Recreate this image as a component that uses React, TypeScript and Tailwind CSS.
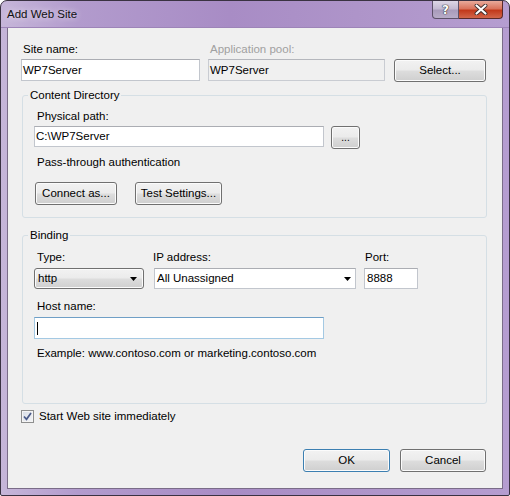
import React from 'react';

const btn =
  'flex items-center justify-center rounded-[3px] border border-[#707070] bg-[linear-gradient(to_bottom,#f2f2f2_0%,#ebebeb_48%,#dddddd_52%,#cfcfcf_100%)] shadow-[inset_0_0_0_1px_#fbfbfb]';
const field =
  'flex items-center border border-[#c2c6cd] border-t-[#abadb3] bg-white pl-[1px]';

function Arrow() {
  return (
    <svg width="7" height="4" viewBox="0 0 7 4" className="shrink-0">
      <path d="M0 0h7L3.5 4z" fill="#000" />
    </svg>
  );
}

export default function App() {
  return (
    <div className="w-[510px] h-[496px] font-['Liberation_Sans',Arial,sans-serif] text-[11.5px] leading-[15px] text-black bg-white">
      <div className="w-[510px] h-[496px] flex flex-col rounded-t-[7px] rounded-b-[2px] border border-[#3a3242] bg-[linear-gradient(90deg,#c6b6d9_0%,#b29bcd_15%,#a88cc5_45%,#ae94c9_70%,#b59dd0_100%)]">
        {/* title bar */}
        <div className="h-[27px] flex items-center pl-[6px] border-b border-[#9d84b8]">
          <span className="text-[#111] [text-shadow:0_0_6px_#f3edf8]">Add Web Site</span>
          <div className="ml-auto mr-[6px] self-start flex h-[18px]">
            <div className="w-[27px] h-[18px] flex items-center justify-center rounded-bl-[4px] border border-t-0 border-[#5d5169] bg-[linear-gradient(to_bottom,#ddd6e6_0%,#c4bad2_45%,#a99bbb_55%,#b8acc8_100%)]">
              <span className="font-['DejaVu_Sans',sans-serif] font-bold text-[12px] leading-[12px] text-white [text-shadow:0_0_1px_#333,0_0_1px_#333,0_0_1px_#333]">?</span>
            </div>
            <div className="w-[44px] h-[18px] flex items-center justify-center rounded-br-[4px] border border-t-0 border-l-0 border-[#5a2a2a] bg-[linear-gradient(to_bottom,#e9aa9b_0%,#d9735c_45%,#c2391b_55%,#d2664a_100%)]">
              <svg width="14" height="11" viewBox="0 0 14 11">
                <path d="M2.5 1.5l9 8M11.5 1.5l-9 8" stroke="#3a2a2a" strokeWidth="3.8" strokeLinecap="round" />
                <path d="M2.5 1.5l9 8M11.5 1.5l-9 8" stroke="#ffffff" strokeWidth="2.2" strokeLinecap="round" />
              </svg>
            </div>
          </div>
        </div>

        {/* client area */}
        <div className="flex-1 mx-[6px] mb-[6px] border border-[#7a6c88] border-t-0 bg-[#f0f0f0] flex flex-col pl-[13px] pr-[15px] pt-[14px]">
          {/* site name row */}
          <div className="flex items-start">
            <div className="w-[179px] flex flex-col gap-[2px]">
              <span className="pl-[2px]">Site name:</span>
              <div className={`${field} h-[22px]`}>WP7Server</div>
            </div>
            <div className="w-[177px] ml-[8px] flex flex-col gap-[2px]">
              <span className="pl-[2px] text-[#a0a0a0]">Application pool:</span>
              <div className="h-[22px] flex items-center border border-[#c9ccd2] border-t-[#b5b7bd] bg-[#f0f0f0] pl-[1px]">WP7Server</div>
            </div>
            <div className={`${btn} w-[92px] h-[23px] ml-[9px] mt-[17px]`}>Select...</div>
          </div>

          {/* content directory */}
          <fieldset className="mt-[6px] ml-[1px] border border-[#d5dfe5] rounded-[3px] pl-[11px] pr-[11px] pt-[6px] pb-[12px] flex flex-col">
            <legend className="-ml-[6px] px-[2px] leading-[15px]">Content Directory</legend>
            <span className="pl-[3px]">Physical path:</span>
            <div className="flex items-start mt-[2px]">
              <div className={`${field} w-[290px] h-[21px]`}>C:\WP7Server</div>
              <div className={`${btn} w-[29px] h-[23px] ml-[7px] text-[10px] leading-[10px]`}>...</div>
            </div>
            <span className="pl-[3px] mt-[6px]">Pass-through authentication</span>
            <div className="flex mt-[12px] ml-[1px]">
              <div className={`${btn} w-[82px] h-[23px]`}>Connect as...</div>
              <div className={`${btn} w-[87px] h-[23px] ml-[18px]`}>Test Settings...</div>
            </div>
          </fieldset>

          {/* binding */}
          <fieldset className="mt-[10px] ml-[1px] border border-[#d5dfe5] rounded-[3px] pl-[11px] pr-[11px] pt-[7px] pb-[42px] flex flex-col">
            <legend className="-ml-[6px] px-[2px] leading-[15px]">Binding</legend>
            <div className="flex items-start">
              <div className="w-[110px] flex flex-col gap-[3px]">
                <span className="pl-[3px]">Type:</span>
                <div className={`${btn} h-[21px] !justify-between pl-[3px] pr-[6px]`}>
                  <span>http</span>
                  <Arrow />
                </div>
              </div>
              <div className="w-[202px] ml-[10px] flex flex-col gap-[3px]">
                <span className="-ml-[1px]">IP address:</span>
                <div className={`${field} h-[21px] justify-between pl-[2px] pr-[4px]`}>
                  <span>All Unassigned</span>
                  <Arrow />
                </div>
              </div>
              <div className="w-[54px] ml-[8px] flex flex-col gap-[3px]">
                <span className="pl-[1px]">Port:</span>
                <div className={`${field} h-[21px] pl-[2px]`}>8888</div>
              </div>
            </div>
            <span className="pl-[3px] mt-[10px]">Host name:</span>
            <div className="mt-[3px] w-[290px] h-[22px] flex items-center border border-[#a4c9e3] border-t-[#6f9fc6] bg-white pl-[2px]">
              <div className="w-[1px] h-[13px] bg-black" />
            </div>
            <span className="pl-[3px] mt-[7px]">Example: www.contoso.com or marketing.contoso.com</span>
          </fieldset>

          {/* start immediately */}
          <div className="flex items-center mt-[5px]">
            <div className="w-[13px] h-[13px] border border-[#8e8f8f] bg-[linear-gradient(135deg,#d8dde6_0%,#f4f5f7_100%)] shadow-[inset_0_0_0_1px_#f4f4f4] flex items-center justify-center">
              <svg width="9" height="9" viewBox="0 0 9 9">
                <path d="M1 4.5l2.5 2.8L8 1" fill="none" stroke="#4a5a88" strokeWidth="1.7" />
              </svg>
            </div>
            <span className="ml-[5px]">Start Web site immediately</span>
          </div>

          {/* buttons */}
          <div className="flex justify-end mt-[25px] mr-[1px]">
            <div className={`${btn} w-[87px] h-[23px] !border-[#3c7fb1] shadow-[inset_0_0_0_1px_#a8dcf5]`}>OK</div>
            <div className={`${btn} w-[86px] h-[23px] ml-[10px]`}>Cancel</div>
          </div>
        </div>
      </div>
    </div>
  );
}
